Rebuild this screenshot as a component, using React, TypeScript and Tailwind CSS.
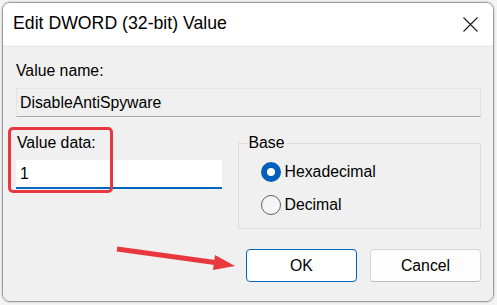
import React from "react";

export default function App() {
  const font = { fontFamily: '"Liberation Sans", Arial, sans-serif' };
  return (
    <div className="w-[497px] h-[305px] bg-[#f4f4f4] p-[2px] overflow-hidden" style={font}>
      <div className="w-[492px] h-[300px] rounded-[8px] border border-[#9c9c9c] overflow-hidden flex flex-col shadow-[0_0_2px_rgba(0,0,0,0.35)]">
        <div className="h-[42px] bg-white flex items-center justify-between pl-[10px] pr-[15px]">
          <span className="text-[17.7px] text-black leading-none">Edit DWORD (32-bit) Value</span>
          <svg width="15" height="15" viewBox="0 0 15 15">
            <path d="M0.5 0.5 L14.5 14.5 M14.5 0.5 L0.5 14.5" stroke="#1a1a1a" strokeWidth="1.1" fill="none" />
          </svg>
        </div>
        <div className="relative flex-1 bg-[#f0f0f0] pl-[13px] pr-[12px] text-[15.8px] text-black">
          <div className="mt-[16px] h-[20px] leading-[20px]">Value name:</div>
          <div className="mt-[7px] h-[29px] w-[465px] border border-[#e3e3e3] border-b-[#a9a9a9] bg-[#efefef] flex items-center pl-[3px]">
            DisableAntiSpyware
          </div>
          <div className="mt-[16px] flex gap-[16px]">
            <div className="w-[206px]">
              <div className="h-[20px] leading-[20px] pl-[1px]">Value data:</div>
              <div className="mt-[7px] h-[29px] bg-white border-b-2 border-[#0067c0] flex items-center pl-[4px]">1</div>
            </div>
            <fieldset className="w-[244px] h-[96px] border border-[#dcdcdc] pl-[8px] pr-[8px] pb-[13px]">
              <legend className="px-[2px] h-[20px] leading-[20px]">Base</legend>
              <div className="flex flex-col gap-[13px] pl-[14px] pt-[9px]">
                <div className="flex items-center gap-[4px] h-[20px]">
                  <span className="w-[20px] h-[20px] rounded-full bg-[#005fb8] flex items-center justify-center">
                    <span className="w-[8px] h-[8px] rounded-full bg-white" />
                  </span>
                  <span>Hexadecimal</span>
                </div>
                <div className="flex items-center gap-[4px] h-[20px]">
                  <span className="w-[20px] h-[20px] rounded-full border border-[#5f5f5f] bg-[#f5f5f5]" />
                  <span>Decimal</span>
                </div>
              </div>
            </fieldset>
          </div>
          <div className="mt-[20px] flex justify-end gap-[13px]">
            <button className="w-[111px] h-[33px] rounded-[4px] border border-[#0067c0] bg-white text-[15.8px] text-black">OK</button>
            <button className="w-[111px] h-[33px] rounded-[4px] border border-[#d6d6d6] border-b-[#bdbdbd] bg-[#fdfdfd] text-[15.8px] text-black">Cancel</button>
          </div>
          <div className="absolute left-[5px] top-[82px] w-[105px] h-[66px] border-[3px] border-[#e8383d] rounded-[5px]" />
          <svg className="absolute left-0 top-0" width="490" height="258" viewBox="0 0 490 258">
            <line x1="114" y1="204" x2="212" y2="217.5" stroke="#e8383d" strokeWidth="5" />
            <polygon points="212,210 232,221 210,225" fill="#e8383d" />
          </svg>
        </div>
      </div>
    </div>
  );
}
